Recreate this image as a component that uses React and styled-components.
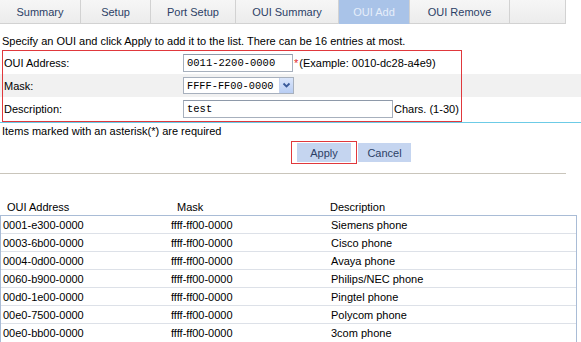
import React from 'react';
import styled, { createGlobalStyle } from 'styled-components';

const GlobalStyle = createGlobalStyle`
html, body {
  margin: 0;
  padding: 0;
  background: #fff;
}
body {
  font-family: "Liberation Sans", Arial, sans-serif;
  font-size: 11px;
  color: #000;
}
`;

const Page = styled.div`
width: 581px;
height: 342px;
overflow: hidden;
position: relative;
`;

const TabBar = styled.div`
display: flex;
height: 24px;
width: 566px;
`;

const Tab = styled.div`
width: ${p => p.$w}px;
flex: none;
display: flex;
align-items: center;
justify-content: center;
background: ${p => (p.$active ? '#a9c3e8' : 'linear-gradient(#f6f6f6, #ececec)')};
color: ${p => (p.$active ? '#e6eefa' : '#2c3f66')};
border-right: 1px solid #d2d2d2;
border-bottom: 1px solid ${p => (p.$active ? '#a9c3e8' : '#d2d2d2')};
font-size: 11px;
box-sizing: border-box;
height: 24px;
`;

const Intro = styled.div`
margin: 10px 0 0 2px;
line-height: 14px;
height: 16px;
`;

const FormWrap = styled.div`
position: relative;
margin-top: 1px;
`;

const FormRow = styled.div`
display: flex;
align-items: center;
height: 23px;
background: ${p => (p.$shade ? '#f1f1f1' : '#fff')};
`;

const Label = styled.div`
width: 179px;
padding-left: 4px;
flex: none;
`;

const TextBox = styled.input`
box-sizing: border-box;
width: ${p => p.$w}px;
height: 18px;
border: 1px solid #a7b0bd;
border-top-color: #8e99a9;
padding: 0 3px;
margin: 0;
font-family: "Liberation Mono", "Courier New", monospace;
font-size: 10.5px;
color: #000;
outline: none;
background: #fff;
`;

const Star = styled.span`
color: #e0282a;
margin-left: 1px;
`;

const Hint = styled.span`
margin-left: 1px;
`;

const SelectBox = styled.div`
box-sizing: border-box;
width: 111px;
height: 17px;
border: 1px solid #a7b0bd;
display: flex;
align-items: center;
justify-content: space-between;
padding-left: 3px;
font-family: "Liberation Mono", "Courier New", monospace;
font-size: 10.3px;
background: #fff;
`;

const SelectArrow = styled.div`
width: 13px;
height: 15px;
background: linear-gradient(#dbe6fb, #b8cdf3);
border-left: 1px solid #c3d2ee;
display: flex;
align-items: center;
justify-content: center;
`;

const Highlight = styled.div`
position: absolute;
left: ${p => p.$x}px;
top: ${p => p.$y}px;
width: ${p => p.$w}px;
height: ${p => p.$h}px;
border: 1px solid #e0383c;
box-sizing: border-box;
pointer-events: none;
`;

const CyanLine = styled.div`
height: 1px;
background: #6ccbe6;
margin-top: 2px;
`;

const Note = styled.div`
padding-left: 2px;
line-height: 14px;
margin-top: 1px;
`;

const ButtonRow = styled.div`
position: relative;
display: flex;
gap: 7px;
padding-left: 297px;
margin-top: 5px;
height: 19px;
`;

const Button = styled.div`
width: ${p => p.$w}px;
height: 19px;
background: #c5d5f0;
color: #2c3f66;
display: flex;
align-items: center;
justify-content: center;
font-size: 11px;
`;

const Separator = styled.div`
width: 566px;
height: 1px;
background: #c9c5bb;
margin-top: 11px;
`;

const Table = styled.div`
margin-top: 25px;
width: 577px;
`;

const HeadRow = styled.div`
display: grid;
grid-template-columns: 168px 160px 1fr;
height: 16px;
align-items: center;
`;

const HeadCell = styled.div`
padding-left: ${p => p.$pad}px;
`;

const Body = styled.div`
border: 1px solid #a9bcd6;
`;

const Row = styled.div`
display: grid;
grid-template-columns: 168px 160px 1fr;
height: 17px;
align-items: center;
border-bottom: 1px solid #dde1e8;
&:last-child {
  border-bottom: none;
  height: 18px;
}
`;

const Cell = styled.div`
padding-left: ${p => p.$pad}px;
`;

const tabs = [
  { name: 'Summary', w: 81 },
  { name: 'Setup', w: 70 },
  { name: 'Port Setup', w: 85 },
  { name: 'OUI Summary', w: 103 },
  { name: 'OUI Add', w: 71, active: true },
  { name: 'OUI Remove', w: 100 },
  { name: '', w: 56 },
];

const rows = [
  ['0001-e300-0000', 'ffff-ff00-0000', 'Siemens phone'],
  ['0003-6b00-0000', 'ffff-ff00-0000', 'Cisco phone'],
  ['0004-0d00-0000', 'ffff-ff00-0000', 'Avaya phone'],
  ['0060-b900-0000', 'ffff-ff00-0000', 'Philips/NEC phone'],
  ['00d0-1e00-0000', 'ffff-ff00-0000', 'Pingtel phone'],
  ['00e0-7500-0000', 'ffff-ff00-0000', 'Polycom phone'],
  ['00e0-bb00-0000', 'ffff-ff00-0000', '3com phone'],
];

export default function App() {
  return (
    <Page>
      <GlobalStyle />
      <TabBar>
        {tabs.map((t, i) => (
          <Tab key={i} $w={t.w} $active={t.active}>{t.name}</Tab>
        ))}
      </TabBar>

      <Intro>Specify an OUI and click Apply to add it to the list. There can be 16 entries at most.</Intro>

      <FormWrap>
        <FormRow>
          <Label>OUI Address:</Label>
          <TextBox $w={110} value="0011-2200-0000" readOnly />
          <Star>*</Star>
          <Hint>(Example: 0010-dc28-a4e9)</Hint>
        </FormRow>
        <FormRow $shade>
          <Label>Mask:</Label>
          <SelectBox>
            FFFF-FF00-0000
            <SelectArrow>
              <svg width="9" height="7" viewBox="0 0 9 7">
                <path d="M1.5 1.5 L4.5 4.5 L7.5 1.5" fill="none" stroke="#3a5a9a" strokeWidth="1.8" />
              </svg>
            </SelectArrow>
          </SelectBox>
        </FormRow>
        <FormRow>
          <Label>Description:</Label>
          <TextBox $w={210} value="test" readOnly />
          <Hint>Chars. (1-30)</Hint>
        </FormRow>
        <Highlight $x={2} $y={-1} $w={460} $h={72} />
      </FormWrap>

      <CyanLine />
      <Note>Items marked with an asterisk(*) are required</Note>

      <ButtonRow>
        <Button $w={54}>Apply</Button>
        <Button $w={53}>Cancel</Button>
        <Highlight $x={291} $y={-2} $w={66} $h={23} />
      </ButtonRow>

      <Separator />

      <Table>
        <HeadRow>
          <HeadCell $pad={7}>OUI Address</HeadCell>
          <HeadCell $pad={9}>Mask</HeadCell>
          <HeadCell $pad={2}>Description</HeadCell>
        </HeadRow>
        <Body>
          {rows.map((r, i) => (
            <Row key={i}>
              <Cell $pad={2}>{r[0]}</Cell>
              <Cell $pad={2}>{r[1]}</Cell>
              <Cell $pad={2}>{r[2]}</Cell>
            </Row>
          ))}
        </Body>
      </Table>
    </Page>
  );
}
